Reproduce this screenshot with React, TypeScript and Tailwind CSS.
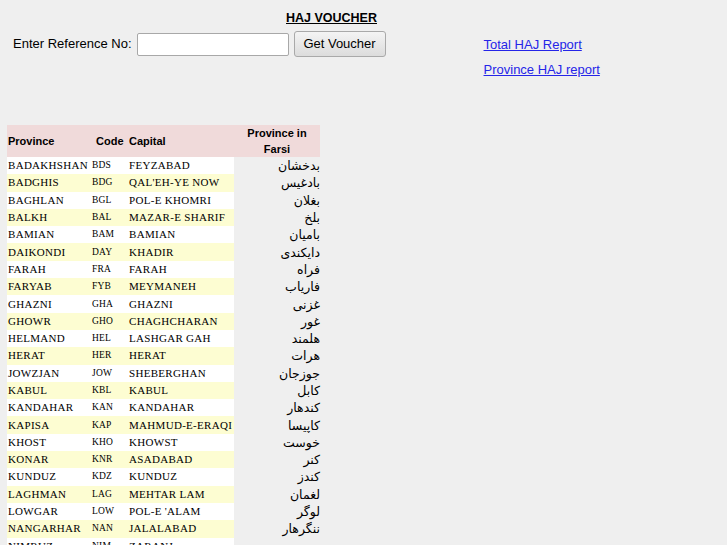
const ROWS: [string, string, string, string][] = [
  ["BADAKHSHAN", "BDS", "FEYZABAD", "بدخشان"],
  ["BADGHIS", "BDG", "QAL'EH-YE NOW", "بادغیس"],
  ["BAGHLAN", "BGL", "POL-E KHOMRI", "بغلان"],
  ["BALKH", "BAL", "MAZAR-E SHARIF", "بلخ"],
  ["BAMIAN", "BAM", "BAMIAN", "بامیان"],
  ["DAIKONDI", "DAY", "KHADIR", "دایکندی"],
  ["FARAH", "FRA", "FARAH", "فراه"],
  ["FARYAB", "FYB", "MEYMANEH", "فاریاب"],
  ["GHAZNI", "GHA", "GHAZNI", "غزنی"],
  ["GHOWR", "GHO", "CHAGHCHARAN", "غور"],
  ["HELMAND", "HEL", "LASHGAR GAH", "هلمند"],
  ["HERAT", "HER", "HERAT", "هرات"],
  ["JOWZJAN", "JOW", "SHEBERGHAN", "جوزجان"],
  ["KABUL", "KBL", "KABUL", "کابل"],
  ["KANDAHAR", "KAN", "KANDAHAR", "کندهار"],
  ["KAPISA", "KAP", "MAHMUD-E-ERAQI", "کاپیسا"],
  ["KHOST", "KHO", "KHOWST", "خوست"],
  ["KONAR", "KNR", "ASADABAD", "کنر"],
  ["KUNDUZ", "KDZ", "KUNDUZ", "کندز"],
  ["LAGHMAN", "LAG", "MEHTAR LAM", "لغمان"],
  ["LOWGAR", "LOW", "POL-E 'ALAM", "لوگر"],
  ["NANGARHAR", "NAN", "JALALABAD", "ننگرهار"],
  ["NIMRUZ", "NIM", "ZARANJ", "نیمروز"],
];

export default function App() {
  return (
    <div className="min-h-[545px] bg-[#efefef] text-black font-['Liberation_Sans',Arial,sans-serif]">
      <div className="pl-[286px] pt-[11px] text-[12.5px] leading-[14px] font-bold underline">HAJ VOUCHER</div>

      <div className="flex items-start pt-[6px]">
        <div className="flex items-center pl-[13px]">
          <span className="text-[13px] mr-[5px]">Enter Reference No:</span>
          <input
            type="text"
            className="w-[152px] h-[23px] bg-white border border-[#a8a8a8] rounded-[2px] outline-none"
          />
          <button className="ml-[5px] w-[92px] h-[26px] text-[13px] rounded-[3px] border border-[#a9a9a9] bg-gradient-to-b from-[#f4f4f4] to-[#dcdcdc]">
            Get Voucher
          </button>
        </div>
        <div className="ml-[98px] flex flex-col gap-[9px] pt-[6px] text-[13px] leading-[16px]">
          <a href="#" className="text-[#2525e8] underline">Total HAJ Report</a>
          <a href="#" className="text-[#2525e8] underline">Province HAJ report</a>
        </div>
      </div>

      <table className="ml-[7px] mt-[47px] border-collapse table-fixed w-[313px]">
        <thead>
          <tr className="bg-[#f0dada] h-[31px] text-[11px] font-bold">
            <th className="w-[84px] text-left pl-[1px] align-middle">Province</th>
            <th className="w-[36px] text-left pl-[5px] align-middle">Code</th>
            <th className="w-[107px] text-left pl-[2px] align-middle">Capital</th>
            <th className="w-[86px] text-center leading-[16px] align-middle">
              Province in
              <br />
              Farsi
            </th>
          </tr>
        </thead>
        <tbody className="font-['Liberation_Serif','Times_New_Roman',serif]">
          {ROWS.map(([p, c, cap, fa], i) => (
            <tr key={p} className="h-[17.3px]">
              <td className={`pl-[1px] text-[11px] tracking-[0.3px] leading-[13px] ${i % 2 ? "bg-[#fdfdd2]" : "bg-white"}`}>{p}</td>
              <td className={`pl-[1px] text-[9.5px] tracking-[0.2px] leading-[13px] ${i % 2 ? "bg-[#fdfdd2]" : "bg-white"}`}>{c}</td>
              <td className={`pl-[2px] text-[11px] tracking-[0.3px] leading-[13px] whitespace-nowrap ${i % 2 ? "bg-[#fdfdd2]" : "bg-white"}`}>{cap}</td>
              <td dir="rtl" className="text-right text-[12.5px] leading-[15px] font-['DejaVu_Sans',sans-serif]">{fa}</td>
            </tr>
          ))}
        </tbody>
      </table>
    </div>
  );
}
